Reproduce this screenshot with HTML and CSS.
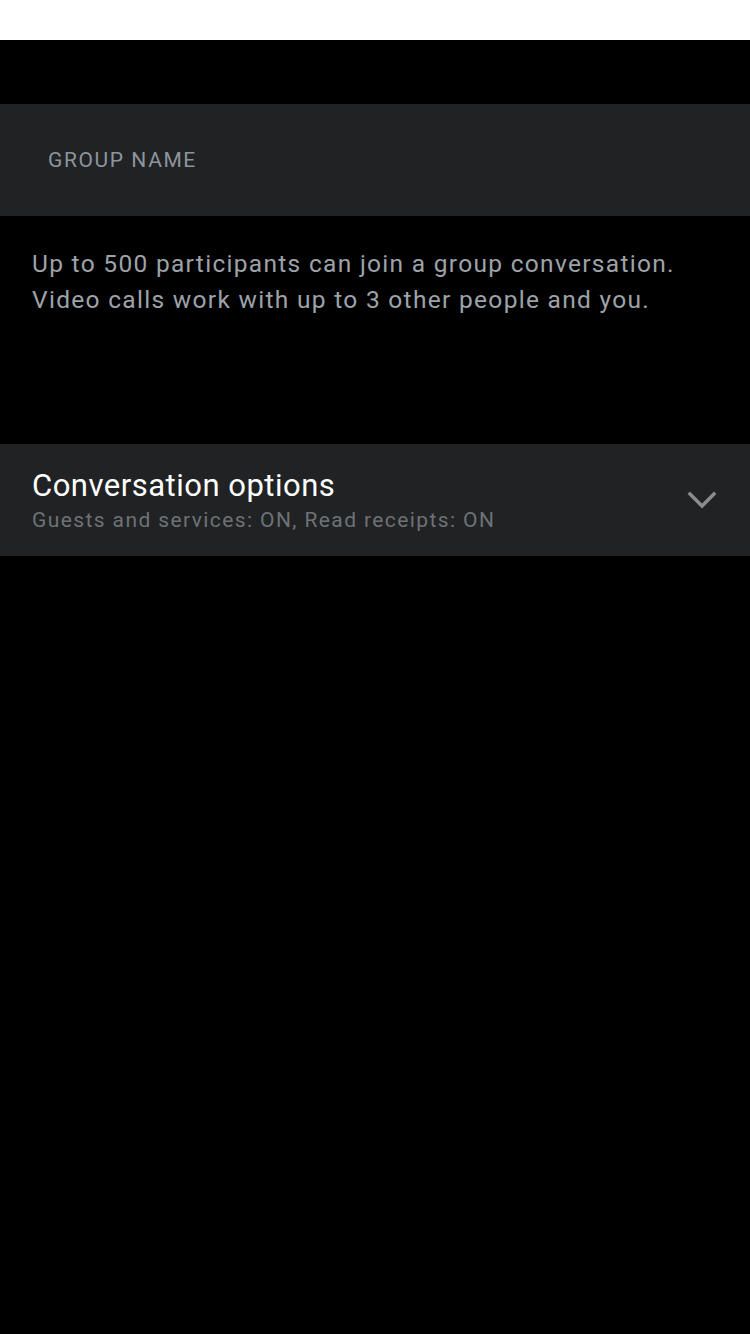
FILE: index.html
```html
<!DOCTYPE html>
<html>
<head>
<meta charset="utf-8">
<link rel="stylesheet" href="styles.css">
</head>
<body>
<div class="statusbar"></div>
<main class="screen">
  <section class="name-panel">
    <span class="name-label">GROUP NAME</span>
  </section>
  <p class="info">Up to 500 participants can join a group conversation.<br>Video calls work with up to 3 other people and you.</p>
  <section class="options">
    <div class="options-text">
      <div class="options-title">Conversation options</div>
      <div class="options-sub">Guests and services: ON, Read receipts: ON</div>
    </div>
    <svg class="chevron" width="32" height="20" viewBox="0 0 32 20">
      <path d="M3 3 L15 15 L27 3" fill="none" stroke="#8a8c8e" stroke-width="3.4" stroke-linecap="square"/>
    </svg>
  </section>
</main>
</body>
</html>
```

FILE: styles.css
```css
* { box-sizing: border-box; }
html, body { margin: 0; padding: 0; }
body {
  width: 750px;
  height: 1334px;
  background: #000;
  font-family: Roboto, "Liberation Sans", sans-serif;
  overflow: hidden;
}
.statusbar {
  height: 40px;
  background: #fff;
}
.screen {
  padding-top: 64px;
  display: flex;
  flex-direction: column;
}
.name-panel {
  height: 112px;
  background: #212224;
  display: flex;
  align-items: center;
  padding-left: 48px;
}
.name-label {
  font-size: 21px;
  color: #8d959c;
  letter-spacing: 1.6px;
}
.info {
  margin: 0;
  padding: 30px 32px 0 32px;
  height: 228px;
  font-size: 24.5px;
  line-height: 36px;
  letter-spacing: 1.3px;
  color: #9da3a8;
}
.options {
  height: 112px;
  background: #212224;
  display: flex;
  align-items: center;
  justify-content: space-between;
  padding: 0 31px 0 32px;
}
.options-title {
  font-size: 31px;
  line-height: 37px;
  letter-spacing: 0.5px;
  color: #fff;
}
.options-sub {
  margin-top: 3px;
  font-size: 21px;
  line-height: 27px;
  letter-spacing: 1.4px;
  color: #6e7276;
}
.chevron {
  display: block;
  margin-top: 2px;
}
```
